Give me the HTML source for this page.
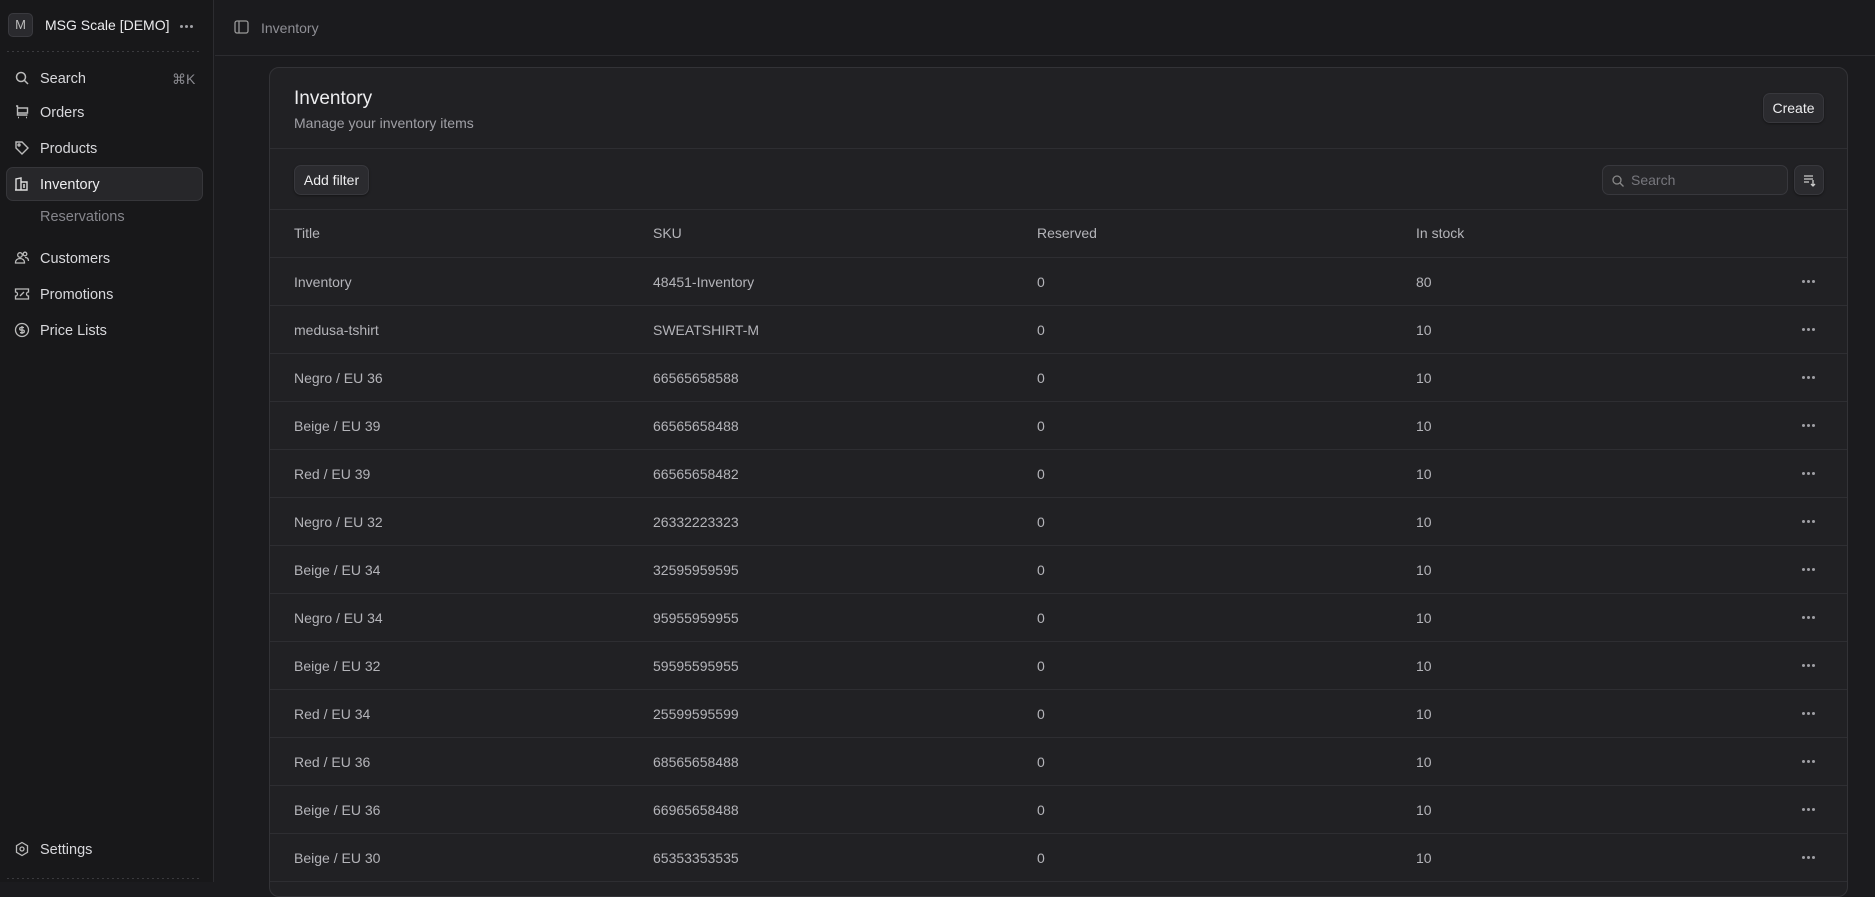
<!DOCTYPE html>
<html><head><meta charset="utf-8"><style>
*{box-sizing:border-box;margin:0;padding:0}
body{width:1875px;height:882px;overflow:hidden;background:#1b1b1e;font-family:"Liberation Sans",sans-serif;color:#ededef;position:relative}
.sb{position:absolute;left:0;top:0;width:214px;height:882px;background:#18181a;border-right:1px solid #2c2c30}
.abs{position:absolute}
.ni{position:absolute;left:40px;font-size:14.5px;color:#d8d8dc}
.ic{position:absolute;left:14px;width:16px;height:16px}
.top{position:absolute;left:215px;top:0;right:0;height:56px;border-bottom:1px solid #2c2c30}
.card{position:absolute;left:269px;top:67px;width:1579px;height:830px;background:#212124;border:1px solid #333337;border-radius:10px}
.hl{position:absolute;left:0;right:0;height:1px;background:#2e2e32}
.btn{position:absolute;background:#2b2b2f;border:1px solid #38383d;border-radius:7px;font-size:14px;color:#ededef;text-align:center;box-shadow:0 1px 2px rgba(0,0,0,.4)}
.c{position:absolute;font-size:14px;color:#b4b4b9}
.dots{position:absolute;left:1532px;width:16px;height:3px}
.dots i{position:absolute;top:0;width:3px;height:3px;border-radius:50%;background:#a0a0a5}
.dotl{position:absolute;left:7px;width:193px;height:1px;background-image:repeating-linear-gradient(90deg,#3a3a3e 0 2px,transparent 2px 5px)}
</style></head><body>
<div class="sb">
 <div class="abs" style="left:8px;top:13px;width:25px;height:24px;border-radius:5px;background:#2a2a2e;border:1px solid #3a3a3f;font-size:13px;color:#bbb;text-align:center;line-height:22px">M</div>
 <div class="abs" style="left:45px;top:17px;font-size:14px;color:#ededef">MSG Scale [DEMO]</div>
 <div class="dots" style="left:180px;top:25px"><i style="left:0"></i><i style="left:5px"></i><i style="left:10px"></i></div>
 <div class="dotl" style="top:51px"></div>
 <svg class="ic" style="top:70px" viewBox="0 0 16 16" fill="none" stroke="#bbb" stroke-width="1.5"><circle cx="7" cy="7" r="4.5"/><path d="M10.5 10.5 14 14"/></svg>
 <div class="ni" style="top:71px">Search</div><div class="abs" style="left:172px;top:71px;font-size:14px;color:#8a8a90">⌘K</div>
 <svg class="ic" style="top:104px" viewBox="0 0 16 16" fill="none" stroke="#bbb" stroke-width="1.4"><path d="M2 2h1.5v9h10M3.5 4h10v5h-10M4 13.5h1M12 13.5h1"/></svg>
 <div class="ni" style="top:105px">Orders</div>
 <svg class="ic" style="top:140px" viewBox="0 0 16 16" fill="none" stroke="#bbb" stroke-width="1.4"><path d="M2 2h6l6 6-6 6-6-6z"/><circle cx="5" cy="5" r="1"/></svg>
 <div class="ni" style="top:141px">Products</div>
 <div class="abs" style="left:6px;top:167px;width:197px;height:34px;background:#27272a;border:1px solid #36363a;border-radius:7px"></div>
 <svg class="ic" style="top:176px" viewBox="0 0 16 16" fill="none" stroke="#ddd" stroke-width="1.4"><path d="M2 14V3l5-1v12M7 6h6v8H1M9 9h2M9 11h2"/></svg>
 <div class="ni" style="top:177px;color:#ededef">Inventory</div>
 <div class="ni" style="top:209px;color:#86868c">Reservations</div>
 <svg class="ic" style="top:250px" viewBox="0 0 16 16" fill="none" stroke="#bbb" stroke-width="1.3"><circle cx="6" cy="5" r="2.3"/><circle cx="11" cy="4" r="1.8"/><path d="M1.5 13c0-3 2-4.5 4.5-4.5s4.5 1.5 4.5 4.5zM11 7.5c2 0 3.5 1 3.5 3.5"/></svg>
 <div class="ni" style="top:251px">Customers</div>
 <svg class="ic" style="top:286px" viewBox="0 0 16 16" fill="none" stroke="#bbb" stroke-width="1.3"><path d="M1.5 3h13v3a2 2 0 000 4v3h-13v-3a2 2 0 000-4zM6 10l4-4"/></svg>
 <div class="ni" style="top:287px">Promotions</div>
 <svg class="ic" style="top:322px" viewBox="0 0 16 16" fill="none" stroke="#bbb" stroke-width="1.3"><circle cx="8" cy="8" r="6.5"/><path d="M10 5.5H7a1.3 1.3 0 000 2.6h2a1.3 1.3 0 010 2.6H6M8 4v8"/></svg>
 <div class="ni" style="top:323px">Price Lists</div>
 <svg class="ic" style="top:841px" viewBox="0 0 16 16" fill="none" stroke="#bbb" stroke-width="1.3"><path d="M8 1.5l5.5 3.2v6.6L8 14.5l-5.5-3.2V4.7z"/><circle cx="8" cy="8" r="2"/></svg>
 <div class="ni" style="top:842px">Settings</div>
 <div class="dotl" style="top:878px"></div>
</div>
<div class="top">
 <svg class="abs" style="left:19px;top:20px" width="15" height="14" viewBox="0 0 15 14" fill="none" stroke="#999" stroke-width="1.3"><rect x="1" y="1" width="13" height="12" rx="2"/><path d="M5 1v12"/></svg>
 <div class="abs" style="left:46px;top:20px;font-size:14px;color:#8f8f95">Inventory</div>
</div>
<div class="card">
 <div class="abs" style="left:24px;top:20px;font-size:19px;color:#ededef">Inventory</div>
 <div class="abs" style="left:24px;top:47px;font-size:14px;color:#a0a0a6">Manage your inventory items</div>
 <div class="btn" style="left:1493px;top:25px;width:61px;height:30px;line-height:28px">Create</div>
 <div class="hl" style="top:80px"></div>
 <div class="btn" style="left:24px;top:97px;width:75px;height:30px;line-height:28px">Add filter</div>
 <div class="abs" style="left:1332px;top:97px;width:186px;height:30px;background:#27272a;border:1px solid #38383d;border-radius:7px">
  <svg class="abs" style="left:8px;top:8px" width="14" height="14" viewBox="0 0 14 14" fill="none" stroke="#888" stroke-width="1.3"><circle cx="6" cy="6" r="4"/><path d="M9 9l3.5 3.5"/></svg>
  <div class="abs" style="left:28px;top:6px;font-size:14px;color:#77777d">Search</div></div>
 <div class="btn" style="left:1524px;top:97px;width:30px;height:30px">
  <svg class="abs" style="left:7px;top:7px" width="15" height="15" viewBox="0 0 15 15" fill="none" stroke="#ccc" stroke-width="1.3"><path d="M2 3h9M2 6h9M2 9h5M11 7v6M9 11l2 2 2-2"/></svg></div>
 <div class="hl" style="top:141px"></div>
 <div class="c" style="left:24px;top:157px">Title</div><div class="c" style="left:383px;top:157px">SKU</div><div class="c" style="left:767px;top:157px">Reserved</div><div class="c" style="left:1146px;top:157px">In stock</div>
 <div class="hl" style="top:189px"></div>
 <div id="rows"></div>
</div>
<script>
var d=[["Inventory","48451-Inventory","80"],["medusa-tshirt","SWEATSHIRT-M","10"],["Negro / EU 36","66565658588","10"],["Beige / EU 39","66565658488","10"],["Red / EU 39","66565658482","10"],["Negro / EU 32","26332223323","10"],["Beige / EU 34","32595959595","10"],["Negro / EU 34","95955959955","10"],["Beige / EU 32","59595595955","10"],["Red / EU 34","25599595599","10"],["Red / EU 36","68565658488","10"],["Beige / EU 36","66965658488","10"],["Beige / EU 30","65353353535","10"]];
var h="";d.forEach(function(r,i){var t=189+i*48;h+='<div class="c" style="left:24px;top:'+(t+17)+'px">'+r[0]+'</div><div class="c" style="left:383px;top:'+(t+17)+'px">'+r[1]+'</div><div class="c" style="left:767px;top:'+(t+17)+'px">0</div><div class="c" style="left:1146px;top:'+(t+17)+'px">'+r[2]+'</div><div class="dots" style="top:'+(t+23)+'px"><i style="left:0"></i><i style="left:5px"></i><i style="left:10px"></i></div><div class="hl" style="top:'+(t+48)+'px"></div>';});
document.getElementById("rows").innerHTML=h;
</script>
</body></html>
